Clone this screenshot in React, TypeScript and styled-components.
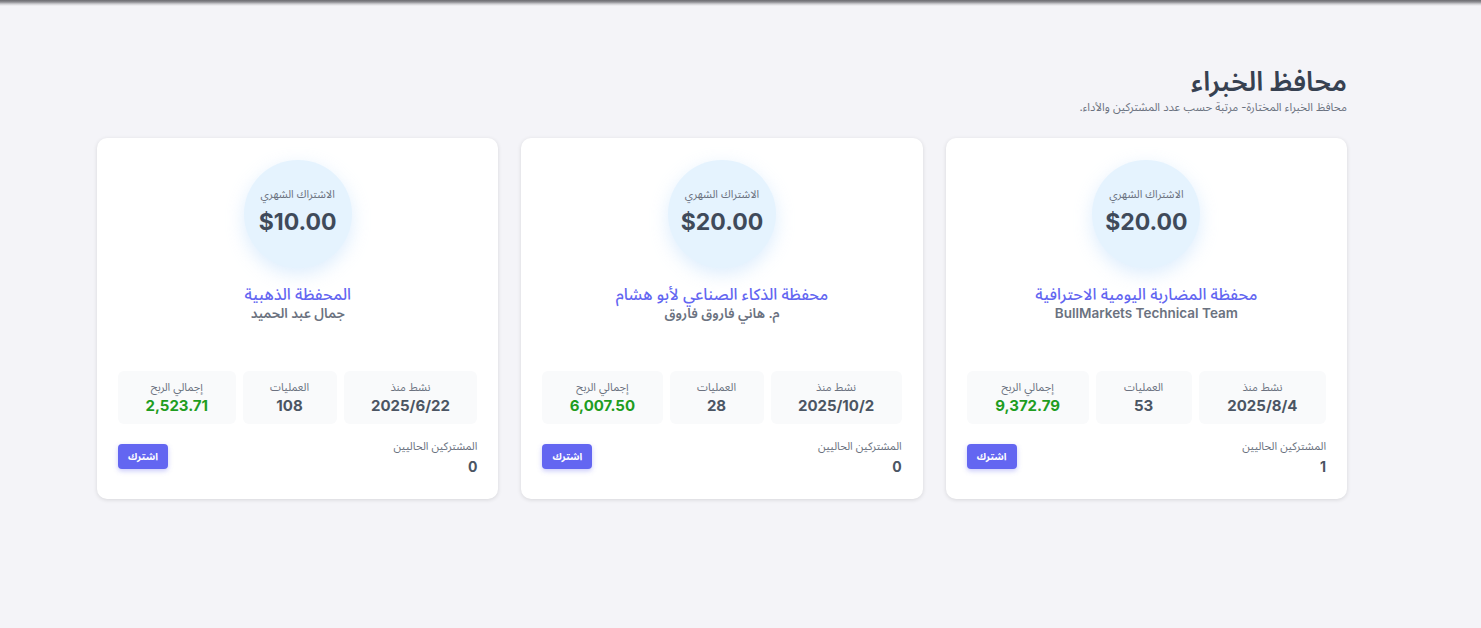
import React from "react";
import styled, { createGlobalStyle } from "styled-components";

const Global = createGlobalStyle`
  html, body { margin: 0; padding: 0; background: #f4f4f8; }
  body { font-family: Inter, "Noto Sans Arabic", "Noto Sans", "DejaVu Sans", sans-serif; color: #374151; }
  * { box-sizing: border-box; }
`;

const Page = styled.div`
  direction: rtl;
  min-height: 628px;
  background: #f4f4f8;
  padding-right: 37px;
`;

const TopShade = styled.div`
  height: 6px;
  margin-right: -37px;
  background: linear-gradient(to bottom, #6b6b70 0px, #8d8d92 2px, #cfcfd3 4px, #f4f4f8 6px);
`;

const Container = styled.main`
  width: 1250px;
  margin: 0 auto;
  padding-top: 58px;
`;

const Title = styled.h1`
  margin: 0;
  font-size: 27px;
  line-height: 36px;
  font-weight: 600;
  color: #374151;
`;

const Subtitle = styled.p`
  margin: 0;
  font-size: 11.3px;
  line-height: 14px;
  color: #6b7280;
`;

const Grid = styled.div`
  display: grid;
  grid-template-columns: repeat(3, 1fr);
  gap: 23px;
  margin-top: 24px;
`;

const Card = styled.article`
  background: #fff;
  border-radius: 10px;
  box-shadow: 0 1px 4px rgba(0, 0, 0, 0.12);
  height: 361px;
  padding: 22px 21px 0;
  display: flex;
  flex-direction: column;
  align-items: stretch;
`;

const Circle = styled.div`
  align-self: center;
  width: 108px;
  height: 108px;
  border-radius: 50%;
  background: #e5f3fe;
  box-shadow: 0 6px 18px rgba(180, 215, 250, 0.45);
  display: flex;
  flex-direction: column;
  align-items: center;
  justify-content: center;
  gap: 6px;
  padding-bottom: 6px;
`;

const CircleLabel = styled.span`
  font-size: 11px;
  color: #6b7280;
  line-height: 15px;
`;

const Price = styled.span`
  font-size: 23px;
  font-weight: 700;
  color: #3f4a5a;
  line-height: 28px;
  direction: ltr;
`;

const PortfolioName = styled.h2`
  margin: 16px 0 0;
  text-align: center;
  font-size: 16px;
  line-height: 20px;
  font-weight: 500;
  color: #6366f1;
`;

const Owner = styled.div`
  text-align: center;
  font-size: 13.5px;
  line-height: 18px;
  font-weight: 600;
  color: #6b7280;
`;

const Stats = styled.div`
  display: flex;
  gap: 7px;
  margin-top: 49px;
`;

const Stat = styled.div`
  flex: 1 1 auto;
  background: #f9fafb;
  border-radius: 6px;
  height: 53px;
  padding: 0 20px;
  display: flex;
  flex-direction: column;
  align-items: center;
  justify-content: center;
  gap: 2px;
`;

const StatLabel = styled.span`
  font-size: 11px;
  line-height: 14px;
  color: #6b7280;
`;

const StatValue = styled.span<{ $green?: boolean }>`
  font-size: 15px;
  line-height: 19px;
  font-weight: 700;
  color: ${(p) => (p.$green ? "#1f9d1f" : "#4b5563")};
  direction: ltr;
`;

const Footer = styled.div`
  display: flex;
  justify-content: space-between;
  align-items: flex-start;
  margin-top: 15px;
`;

const Subs = styled.div`
  display: flex;
  flex-direction: column;
  align-items: flex-start;
`;

const SubsLabel = styled.span`
  font-size: 11px;
  line-height: 14px;
  color: #6b7280;
`;

const SubsValue = styled.span`
  font-size: 14px;
  line-height: 20px;
  font-weight: 700;
  color: #4b5563;
  margin-top: 4px;
`;

const SubscribeButton = styled.button`
  margin-top: 5px;
  background: #6366f1;
  color: #fff;
  border: none;
  border-radius: 4px;
  width: 50px;
  height: 25px;
  font-family: inherit;
  font-size: 10px;
  font-weight: 700;
  box-shadow: 0 2px 5px rgba(99, 102, 241, 0.35);
  cursor: pointer;
`;

type Portfolio = {
  price: string;
  name: string;
  owner: string;
  since: string;
  trades: string;
  profit: string;
  subs: string;
};

const portfolios: Portfolio[] = [
  {
    price: "$20.00",
    name: "محفظة المضاربة اليومية الاحترافية",
    owner: "BullMarkets Technical Team",
    since: "2025/8/4",
    trades: "53",
    profit: "9,372.79",
    subs: "1",
  },
  {
    price: "$20.00",
    name: "محفظة الذكاء الصناعي لأبو هشام",
    owner: "م. هاني فاروق فاروق",
    since: "2025/10/2",
    trades: "28",
    profit: "6,007.50",
    subs: "0",
  },
  {
    price: "$10.00",
    name: "المحفظة الذهبية",
    owner: "جمال عبد الحميد",
    since: "2025/6/22",
    trades: "108",
    profit: "2,523.71",
    subs: "0",
  },
];

export default function App() {
  return (
    <Page>
      <Global />
      <TopShade />
      <Container>
        <Title>محافظ الخبراء</Title>
        <Subtitle>محافظ الخبراء المختارة- مرتبة حسب عدد المشتركين والأداء.</Subtitle>
        <Grid>
          {portfolios.map((p) => (
            <Card key={p.name}>
              <Circle>
                <CircleLabel>الاشتراك الشهري</CircleLabel>
                <Price>{p.price}</Price>
              </Circle>
              <PortfolioName>{p.name}</PortfolioName>
              <Owner>{p.owner}</Owner>
              <Stats>
                <Stat>
                  <StatLabel>نشط منذ</StatLabel>
                  <StatValue>{p.since}</StatValue>
                </Stat>
                <Stat>
                  <StatLabel>العمليات</StatLabel>
                  <StatValue>{p.trades}</StatValue>
                </Stat>
                <Stat>
                  <StatLabel>إجمالي الربح</StatLabel>
                  <StatValue $green>{p.profit}</StatValue>
                </Stat>
              </Stats>
              <Footer>
                <Subs>
                  <SubsLabel>المشتركين الحاليين</SubsLabel>
                  <SubsValue>{p.subs}</SubsValue>
                </Subs>
                <SubscribeButton>اشترك</SubscribeButton>
              </Footer>
            </Card>
          ))}
        </Grid>
      </Container>
    </Page>
  );
}
